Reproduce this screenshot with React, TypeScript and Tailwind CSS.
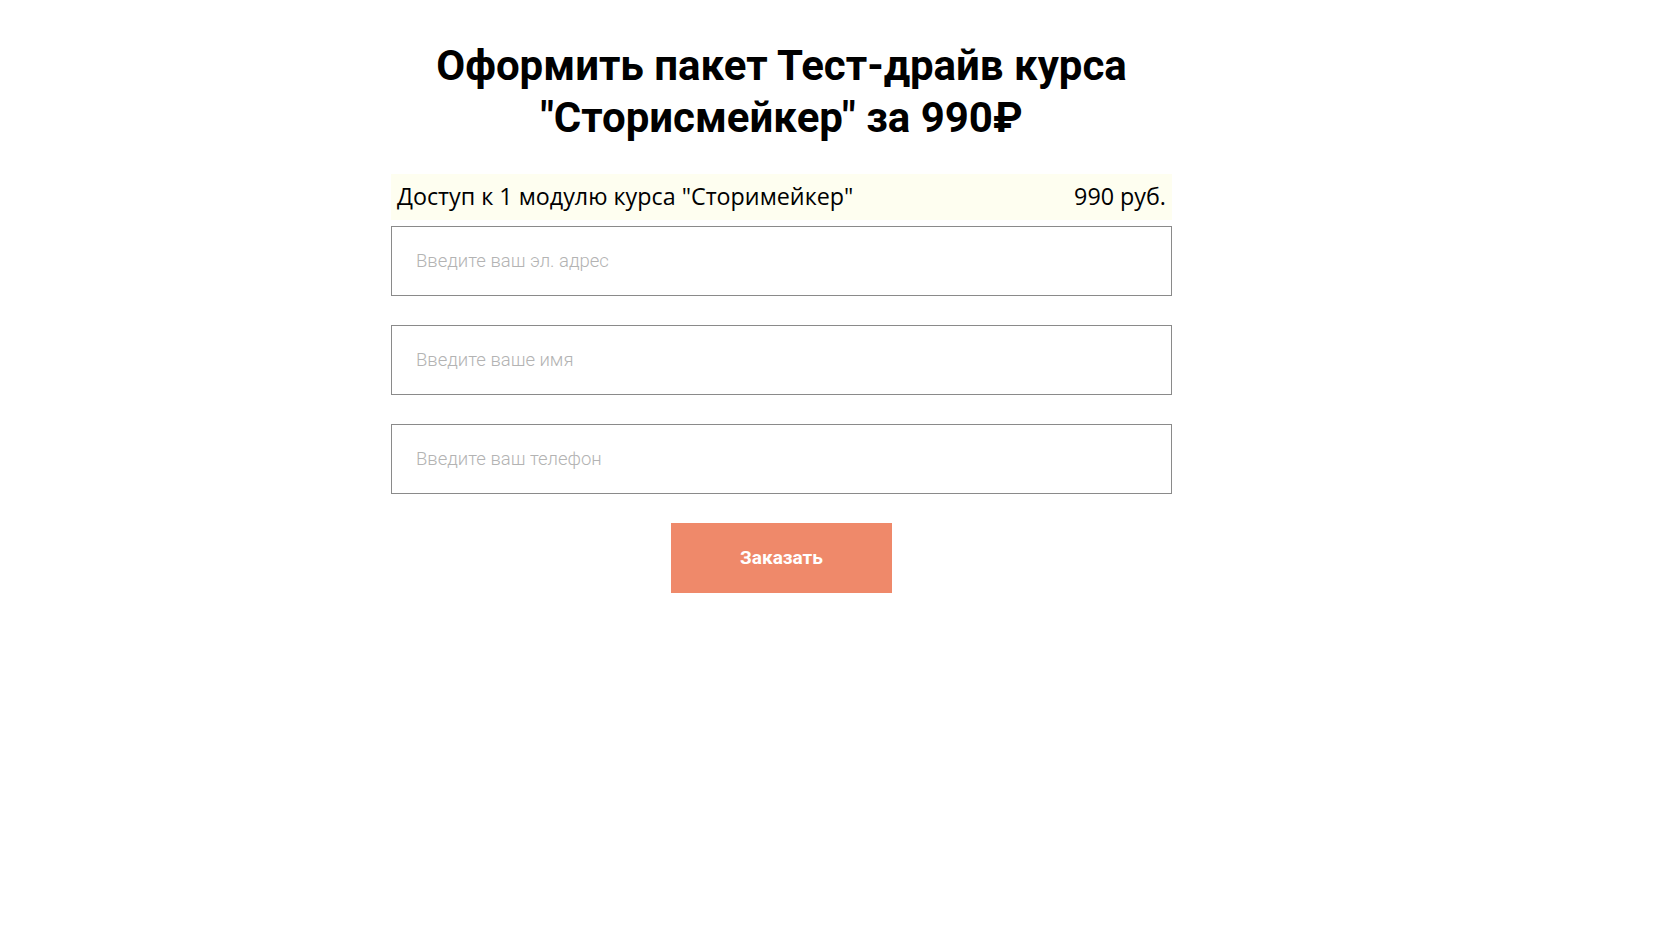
export default function App() {
  return (
    <div className="min-h-[942px] w-full bg-white">
      <div className="pl-[391px] pt-[40px]">
        <div className="w-[781px]">
          <h1 className="text-center text-[42px] font-bold leading-[52px] text-black" style={{ fontFamily: "Roboto, 'Liberation Sans', sans-serif" }}>
            Оформить пакет Тест-драйв курса
            <br />
            "Сторисмейкер" за 990₽
          </h1>
          <div
            className="mt-[30px] flex h-[46px] items-center justify-between bg-[#fefef0] px-[6px] pb-[2px] text-[23.3px] text-black"
            style={{ fontFamily: "'Open Sans', sans-serif" }}
          >
            <span>Доступ к 1 модулю курса "Сторимейкер"</span>
            <span>990 руб.</span>
          </div>
          <div className="mt-[6px] flex flex-col gap-[29px]" style={{ fontFamily: "Roboto, sans-serif" }}>
            <input
              type="text"
              placeholder="Введите ваш эл. адрес"
              className="h-[70px] w-full border border-[#8a8a8a] px-[24px] text-[18.5px] font-light outline-none placeholder:text-[#b3b3b3]"
            />
            <input
              type="text"
              placeholder="Введите ваше имя"
              className="h-[70px] w-full border border-[#8a8a8a] px-[24px] text-[18.5px] font-light outline-none placeholder:text-[#b3b3b3]"
            />
            <input
              type="text"
              placeholder="Введите ваш телефон"
              className="h-[70px] w-full border border-[#8a8a8a] px-[24px] text-[18.5px] font-light outline-none placeholder:text-[#b3b3b3]"
            />
          </div>
          <div className="mt-[29px] flex justify-center">
            <button
              className="h-[70px] w-[221px] bg-[#ef896a] text-[19px] font-bold text-white"
              style={{ fontFamily: "Roboto, sans-serif" }}
            >
              Заказать
            </button>
          </div>
        </div>
      </div>
    </div>
  );
}
